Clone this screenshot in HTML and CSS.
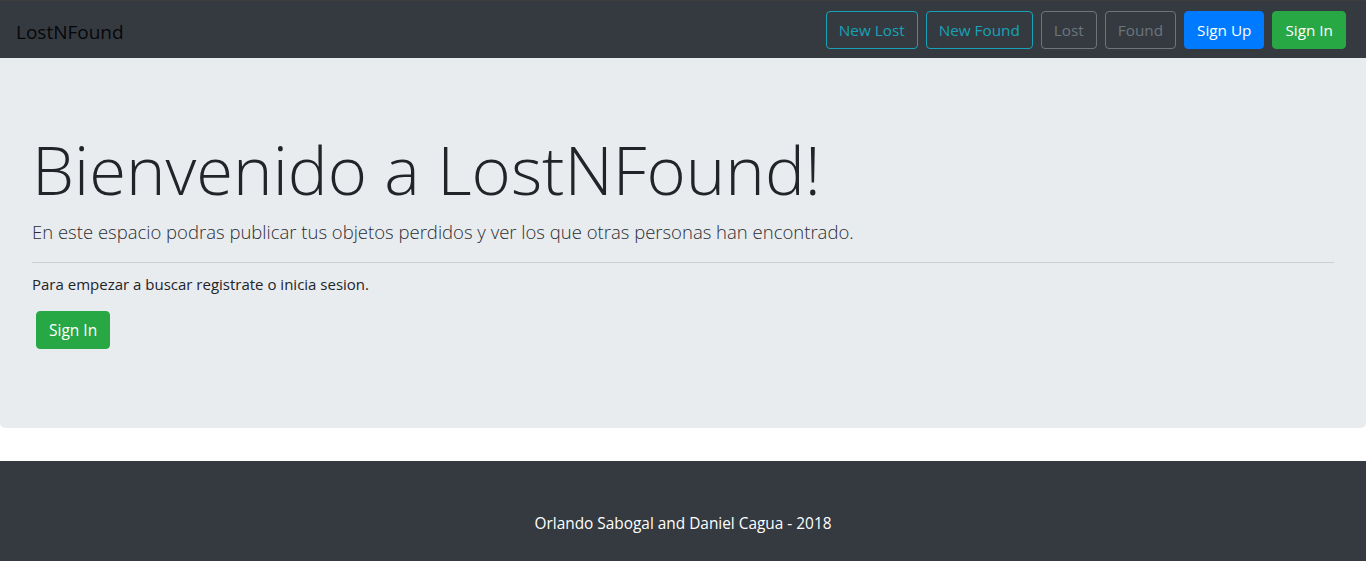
FILE: index.html
```html
<!DOCTYPE html>
<html lang="es">
<head>
<meta charset="utf-8">
<title>LostNFound</title>
<link rel="stylesheet" href="styles.css">
</head>
<body>
<nav class="navbar">
  <a class="brand" href="#">LostNFound</a>
  <div class="nav-actions">
    <a class="btn btn-outline-info" href="#">New Lost</a>
    <a class="btn btn-outline-info" href="#">New Found</a>
    <a class="btn btn-outline-secondary" href="#">Lost</a>
    <a class="btn btn-outline-secondary" href="#">Found</a>
    <a class="btn btn-primary" href="#">Sign Up</a>
    <a class="btn btn-success" href="#">Sign In</a>
  </div>
</nav>
<main class="jumbotron">
  <h1 class="display">Bienvenido a LostNFound!</h1>
  <p class="lead">En este espacio podras publicar tus objetos perdidos y ver los que otras personas han encontrado.</p>
  <hr class="divider">
  <p class="text">Para empezar a buscar registrate o inicia sesion.</p>
  <p class="cta"><a class="btn btn-success btn-cta" href="#">Sign In</a></p>
</main>
<footer class="footer">
  <p>Orlando Sabogal and Daniel Cagua - 2018</p>
</footer>
</body>
</html>
```

FILE: styles.css
```css
* { box-sizing: border-box; }
html, body { margin: 0; padding: 0; }
body {
  font-family: "Open Sans", "Noto Sans", "Liberation Sans", sans-serif;
  font-size: 16px;
  line-height: 1.5;
  color: #212529;
  background: #fff;
}
a { text-decoration: none; }

.navbar {
  display: flex;
  align-items: center;
  justify-content: space-between;
  background: #343a40;
  border-top: 1px solid #3d3d3d;
  padding: 10px 20px 9px 16px;
  height: 58px;
}
.brand {
  color: rgba(0,0,0,.9);
  font-size: 19px;
  line-height: 30px;
  padding-top: 3px;
}
.nav-actions {
  display: flex;
  gap: 8px;
}
.btn {
  display: inline-block;
  padding: 6px 12px;
  font-size: 15.3px;
  line-height: 24px;
  border: 1px solid transparent;
  border-radius: 4px;
  white-space: nowrap;
}
.btn-outline-info { color: #17a2b8; border-color: #17a2b8; }
.btn-outline-secondary { color: #6c757d; border-color: #6c757d; }
.btn-primary { color: #fff; background: #007bff; border-color: #007bff; }
.btn-success { color: #fff; background: #28a745; border-color: #28a745; }
.btn-cta { font-size: 15.5px; }

.jumbotron {
  background: #e9ecef;
  border-radius: 0 0 5px 5px;
  padding: 68px 32px 79px;
  margin-bottom: 33px;
}
.display {
  margin: 0 0 5px;
  font-size: 67px;
  font-weight: 300;
  line-height: 86px;
}
.lead {
  margin: 0;
  font-size: 18.5px;
  font-weight: 300;
  line-height: 30px;
  color: #2a2e33;
}
.divider {
  margin: 15px 0 9px;
  border: 0;
  border-top: 1px solid rgba(0,0,0,.12);
}
.text { margin: 0 0 15px; font-size: 15px; line-height: 24px; }
.cta { margin: 0; padding-left: 4px; line-height: 38px; height: 38px; }

.footer {
  background: #343a40;
  color: #fff;
  text-align: center;
  padding: 49px 0 24px;
}
.footer p { margin: 0; font-size: 15.4px; line-height: 28px; }
```
